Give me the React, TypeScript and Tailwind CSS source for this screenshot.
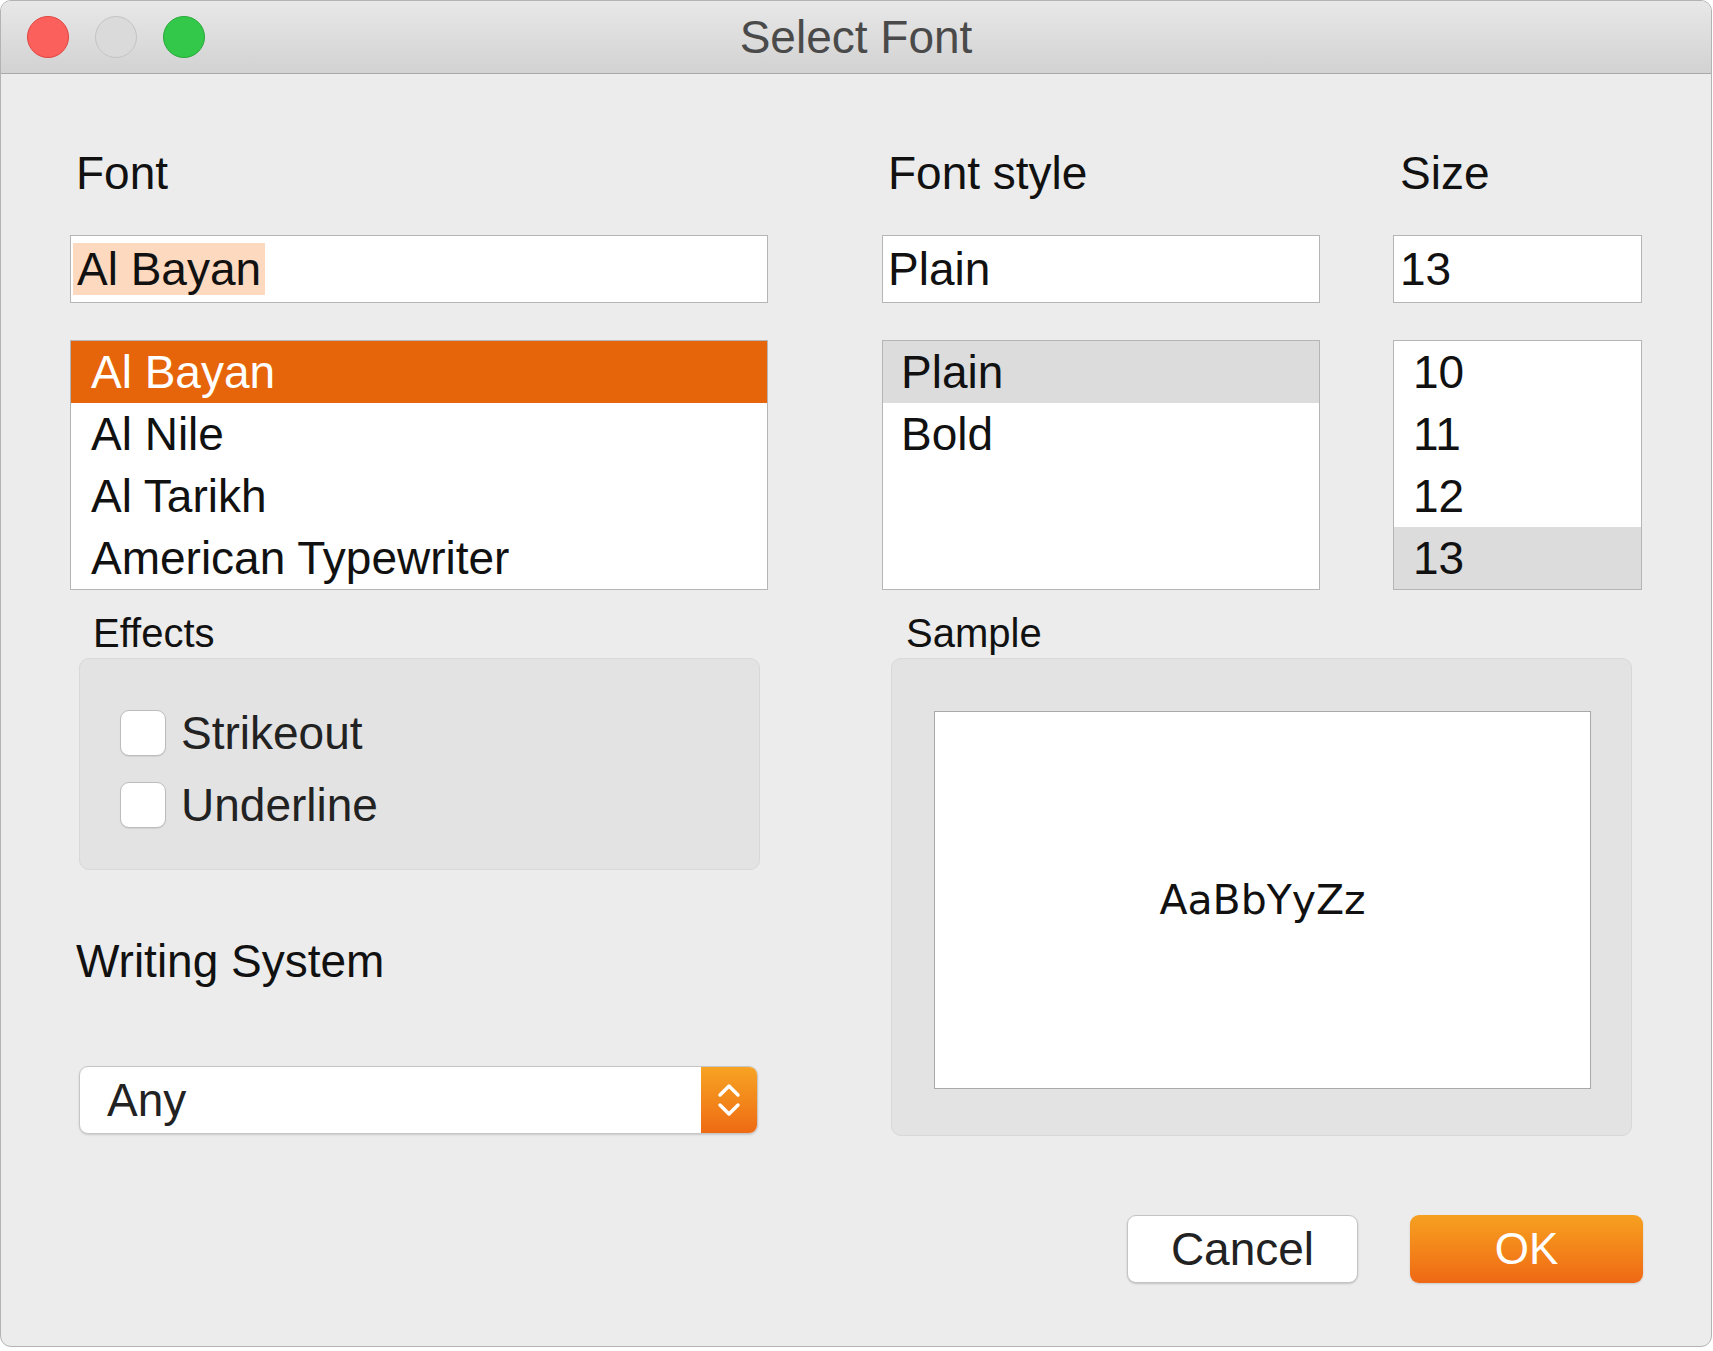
import React from "react";

function Chevrons() {
  return (
    <svg width="28" height="44" viewBox="0 0 28 44" fill="none">
      <path d="M5 17 L14 8 L23 17" stroke="white" strokeWidth="3.5" strokeLinecap="round" strokeLinejoin="round" />
      <path d="M5 27 L14 36 L23 27" stroke="white" strokeWidth="3.5" strokeLinecap="round" strokeLinejoin="round" />
    </svg>
  );
}

function Checkbox({ label }: { label: string }) {
  return (
    <div className="flex items-center h-[46px]">
      <div className="w-[46px] h-[46px] rounded-[9px] bg-white border border-[#bcbcbc] shadow-[0_1px_1px_rgba(0,0,0,0.08)]" />
      <span className="ml-[15px] text-[46px] leading-[52px] text-[#222]">{label}</span>
    </div>
  );
}

export default function App() {
  const fonts = ["Al Bayan", "Al Nile", "Al Tarikh", "American Typewriter"];
  const styles = ["Plain", "Bold"];
  const sizes = ["10", "11", "12", "13"];
  return (
    <div className="w-[1713px] h-[1351px] bg-white font-['Liberation_Sans',Arial,sans-serif] text-[#111]">
      <div className="w-[1712px] h-[1347px] rounded-[11px] border border-[#b3b3b3] bg-[#ececec] overflow-hidden flex flex-col">
        {/* Title bar */}
        <div className="h-[73px] shrink-0 border-b border-[#a8a8a8] bg-gradient-to-b from-[#e8e8e8] to-[#d2d2d2] grid grid-cols-[1fr_auto_1fr] items-center">
          <div className="flex items-center gap-[26px] pl-[26px]">
            <div className="w-[42px] h-[42px] rounded-full bg-[#fc605c] border border-[#e0443e]" />
            <div className="w-[42px] h-[42px] rounded-full bg-[#dadada] border border-[#c4c4c4]" />
            <div className="w-[42px] h-[42px] rounded-full bg-[#34c84a] border border-[#28a838]" />
          </div>
          <div className="text-[46px] leading-[52px] text-[#4a4a4a]">Select Font</div>
          <div />
        </div>

        {/* Content */}
        <div className="pl-[69px] pt-[73px] flex flex-col">
          {/* Top section */}
          <div className="flex">
            <div className="w-[698px]">
              <div className="h-[52px] leading-[52px] text-[46px] pl-[6px]">Font</div>
              <div className="mt-[36px] h-[68px] bg-white border border-[#b5b5b5] flex items-center pl-[2px]">
                <span className="bg-[#fdd9bf] px-[4px] text-[46px] leading-[52px]">Al Bayan</span>
              </div>
              <div className="mt-[37px] h-[250px] bg-white border border-[#b5b5b5]">
                {fonts.map((f, i) => (
                  <div
                    key={f}
                    className={
                      "h-[62px] flex items-center pl-[20px] text-[46px] leading-[52px] " +
                      (i === 0 ? "bg-[#e6650a] text-white" : "")
                    }
                  >
                    {f}
                  </div>
                ))}
              </div>
            </div>

            <div className="w-[438px] ml-[114px]">
              <div className="h-[52px] leading-[52px] text-[46px] pl-[6px]">Font style</div>
              <div className="mt-[36px] h-[68px] bg-white border border-[#b5b5b5] flex items-center pl-[5px]">
                <span className="text-[46px] leading-[52px]">Plain</span>
              </div>
              <div className="mt-[37px] h-[250px] bg-white border border-[#b5b5b5]">
                {styles.map((s, i) => (
                  <div
                    key={s}
                    className={
                      "h-[62px] flex items-center pl-[18px] text-[46px] leading-[52px] " +
                      (i === 0 ? "bg-[#dcdcdc]" : "")
                    }
                  >
                    {s}
                  </div>
                ))}
              </div>
            </div>

            <div className="w-[249px] ml-[73px]">
              <div className="h-[52px] leading-[52px] text-[46px] pl-[7px]">Size</div>
              <div className="mt-[36px] h-[68px] bg-white border border-[#b5b5b5] flex items-center pl-[6px]">
                <span className="text-[46px] leading-[52px]">13</span>
              </div>
              <div className="mt-[37px] h-[250px] bg-white border border-[#b5b5b5]">
                {sizes.map((s, i) => (
                  <div
                    key={s}
                    className={
                      "h-[62px] flex items-center pl-[19px] text-[46px] leading-[52px] " +
                      (i === 3 ? "bg-[#dcdcdc]" : "")
                    }
                  >
                    {s}
                  </div>
                ))}
              </div>
            </div>
          </div>

          {/* Bottom section */}
          <div className="flex ml-[9px] mt-[20px]">
            <div className="w-[681px] flex flex-col">
              <div className="h-[46px] leading-[46px] text-[40px] pl-[14px]">Effects</div>
              <div className="mt-[2px] h-[212px] rounded-[10px] bg-[#e3e3e3] border border-[#d8d8d8] pt-[51px] pl-[40px] flex flex-col gap-[26px]">
                <Checkbox label="Strikeout" />
                <Checkbox label="Underline" />
              </div>
              <div className="mt-[65px] -ml-[3px] h-[52px] leading-[52px] text-[46px]">Writing System</div>
              <div className="mt-[79px] w-[679px] h-[68px] rounded-[9px] bg-white border border-[#c6c6c6] shadow-[0_1px_2px_rgba(0,0,0,0.15)] flex overflow-hidden">
                <div className="flex-1 flex items-center pl-[27px] text-[46px] leading-[52px] text-[#222]">Any</div>
                <div className="w-[56px] h-full bg-gradient-to-b from-[#f6a323] to-[#ee6a13] flex items-center justify-center">
                  <Chevrons />
                </div>
              </div>
            </div>

            <div className="w-[741px] ml-[131px] flex flex-col">
              <div className="h-[46px] leading-[46px] text-[40px] pl-[15px]">Sample</div>
              <div className="mt-[2px] h-[478px] rounded-[10px] bg-[#e3e3e3] border border-[#d8d8d8] pt-[52px] pl-[42px] pr-[40px]">
                <div className="h-[378px] bg-white border border-[#a9a9a9] flex items-center justify-center">
                  <span className="font-['DejaVu_Sans',sans-serif] text-[41px] leading-[50px] text-[#111]">AaBbYyZz</span>
                </div>
              </div>
            </div>
          </div>

          {/* Buttons */}
          <div className="w-[1573px] mt-[79px] flex justify-end gap-[52px]">
            <button className="w-[231px] h-[68px] rounded-[9px] bg-white border border-[#c4c4c4] shadow-[0_1px_2px_rgba(0,0,0,0.18)] text-[46px] leading-[52px] text-[#222]">
              Cancel
            </button>
            <button className="w-[233px] h-[68px] rounded-[9px] bg-gradient-to-b from-[#f6a020] to-[#ef6814] shadow-[0_1px_2px_rgba(0,0,0,0.15)] text-[44px] leading-[52px] text-white">
              OK
            </button>
          </div>
        </div>
      </div>
    </div>
  );
}
